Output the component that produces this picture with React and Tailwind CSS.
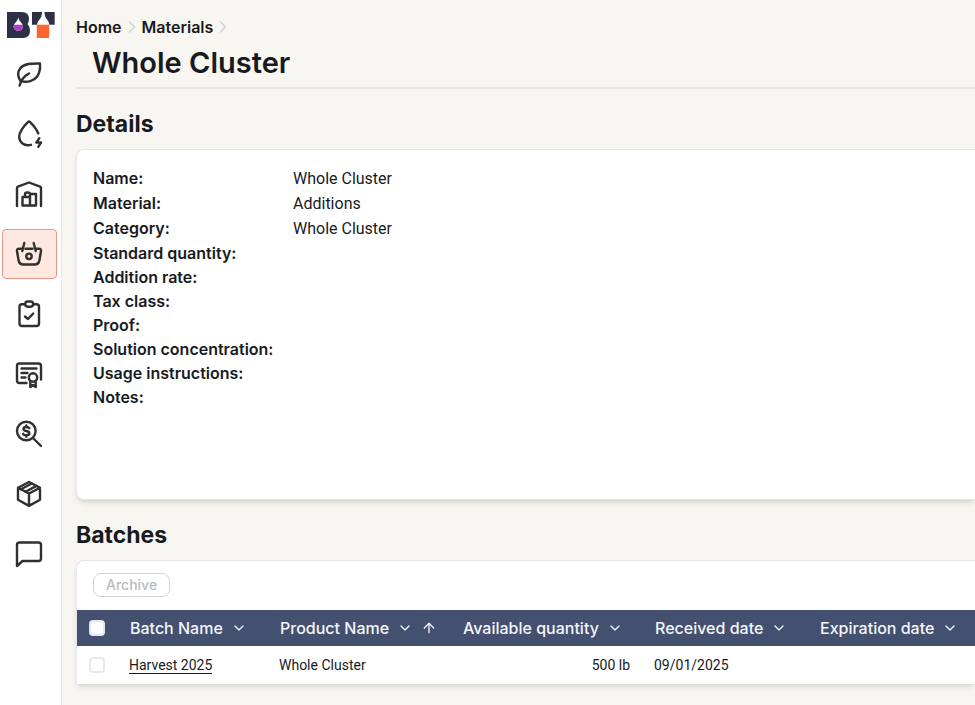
import React, { useState } from 'react';
import { ArrowUp, ChevronDown, ChevronRight } from 'lucide-react';

const NavIcon = ({ children }) => (
    <svg
        viewBox="0 0 30 30"
        className="h-[30px] w-[30px]"
        fill="none"
        stroke="currentColor"
        strokeWidth="2.4"
        strokeLinecap="round"
        strokeLinejoin="round"
        aria-hidden="true"
    >
        {children}
    </svg>
);

const navItems = [
    {
        label: 'Vineyard',
        icon: (
            <>
                <path d="M26 4.500C19 4.500 10.500 4 6.300 9.200C3.300 13 4 18 6.400 21.800C13.500 24 20 22 23.200 17.500C26 13.500 26.300 8.500 26 4.500z" />
                <path d="M15 14.500C10 17 7.300 20.500 5.600 26.500" />
            </>
        )
    },
    {
        label: 'Production',
        icon: (
            <>
                <path d="M24.300 14.500C22.500 10 19 6 15.900 2.900Q15 2.100 14.100 2.900C9.500 7.500 5.200 13 5.200 17.500C5.200 23.300 10 27.500 17 25.800" />
                <path d="M25.300 19.300L22.300 23.500H27L24.300 27.800" />
            </>
        )
    },
    {
        label: 'Warehouse',
        icon: (
            <>
                <path d="M3 27V9Q3 8.100 3.900 7.700L15 3.500L26.100 7.700Q27 8.100 27 9V27" />
                <path d="M8.500 18H16V26.500H8.500zM16 15H22V26.500H16zM11 18V15.500Q11 13.500 13 13.500H14Q16 13.500 16 15.500" />
            </>
        )
    },
    {
        label: 'Materials',
        icon: (
            <>
                <path d="M8 9.700H5Q2.700 9.700 3 12L4.500 21Q5.200 25.500 9.500 25.500H20.500Q24.800 25.500 25.500 21L27 12Q27.300 9.700 25 9.700H22M11.500 9.700H18.500" />
                <path d="M10.300 4L8.300 12M19.700 4L21.700 12" />
                <circle cx="15" cy="17.300" r="2.700" />
            </>
        )
    },
    {
        label: 'Tasks',
        icon: (
            <>
                <path d="M11 5.200H8Q5.500 5.200 5.500 7.700V24.500Q5.500 27 8 27H22.500Q25 27 25 24.500V7.700Q25 5.200 22.500 5.200H19.500" />
                <rect x="11.200" y="2.500" width="8" height="5.200" rx="2.600" />
                <path d="M11 17.500L14 20L19.200 14.500" />
            </>
        )
    },
    {
        label: 'Compliance',
        icon: (
            <>
                <path d="M12.500 24H5.500Q3 24 3 21.500V7Q3 4.500 5.500 4.500H24.500Q27 4.500 27 7V20.500" />
                <path d="M7.500 9.500H22.500M7.500 14H13.500M7.500 18.500H11.500" />
                <circle cx="19" cy="18.500" r="4.200" />
                <path d="M16.300 22V28L19 26L21.700 28V22" />
            </>
        )
    },
    {
        label: 'Costing',
        icon: (
            <>
                <circle cx="12.300" cy="12" r="9.300" />
                <path d="M19 19L27 27" />
                <path d="M15.300 9.200Q14.800 8 12.300 8Q9.500 8 9.500 10Q9.500 11.600 12.300 12Q15.300 12.400 15.300 14.200Q15.300 16.200 12.300 16.200Q9.700 16.200 9.200 14.800M12.300 6.500V8M12.300 16.200V17.700" />
            </>
        )
    },
    {
        label: 'Inventory',
        icon: (
            <>
                <path d="M15 3L26 8.700V20.700L15 26.900L4 20.700V8.700zM4 8.700L15 14.500L26 8.700M15 14.500V26.900" />
                <path d="M7 10.300L17.800 4.500M11.500 12.700L22.500 6.900" />
            </>
        )
    },
    {
        label: 'Messages',
        icon: <path d="M3 27V6Q3 3.500 5.500 3.500H24.500Q27 3.500 27 6V19.500Q27 22 24.500 22H8.500z" />
    }
];

const details = [
    { label: 'Name:', value: 'Whole Cluster' },
    { label: 'Material:', value: 'Additions' },
    { label: 'Category:', value: 'Whole Cluster' },
    { label: 'Standard quantity:' },
    { label: 'Addition rate:' },
    { label: 'Tax class:' },
    { label: 'Proof:' },
    { label: 'Solution concentration:' },
    { label: 'Usage instructions:' },
    { label: 'Notes:' }
];

const columns = [
    { title: 'Batch Name', width: 'w-[150px]' },
    { title: 'Product Name', width: 'w-[183px]', sorted: true },
    { title: 'Available quantity', width: 'w-[192px]' },
    { title: 'Received date', width: 'w-[165px]' },
    { title: 'Expiration date', width: 'w-auto' }
];

const Logo = () => (
    <svg viewBox="0 0 48 26" className="h-[26px] w-12" aria-hidden="true">
        <path d="M0 0H15Q22 0 22 7Q22 10 20.500 12Q23 14.500 23 18.500Q23 26 16 26H0z" fill="#2c3148" />
        <path d="M11.300 5.500Q11.800 8.500 13.800 10.300Q16 12.300 16 14.300A4.700 4.700 0 0 1 6.600 14.300Q6.600 12.300 8.800 10.300Q10.800 8.500 11.300 5.500z" fill="#fff" />
        <path d="M6.600 12.800H16V14.300A4.700 4.700 0 0 1 6.600 14.300z" fill="#b33fc4" />
        <path d="M25 0H35Q35 5 32.500 7.500Q30 10 30 12.700H25zM37.500 0H47.700V12.700H42.300Q42.300 10 40 7.500Q37.500 5 37.500 0z" fill="#2c3148" />
        <rect x="29.800" y="12.700" width="12.400" height="13.300" fill="#fa6530" />
    </svg>
);

const Sidebar = () => (
    <aside className="w-[62px] shrink-0 border-r border-gray-200 bg-white pt-3">
        <a href="#home" aria-label="Dashboard" className="ml-[7px] block">
            <Logo />
        </a>
        <nav className="mt-[11px] flex flex-col gap-[10px] px-[2px]">
            {navItems.map(({ label, icon }) => (
                <a
                    key={label}
                    href={`#${label.toLowerCase()}`}
                    aria-label={label}
                    className={`flex h-[50px] w-[55px] items-center rounded border pl-[11px] text-[#2f3030] ${
                        label === 'Materials' ? 'border-[#ee9584] bg-[#ffe8df]' : 'border-transparent'
                    }`}
                >
                    <NavIcon>{icon}</NavIcon>
                </a>
            ))}
        </nav>
    </aside>
);

const Checkbox = ({ label, checked, onChange }) => (
    <input
        type="checkbox"
        aria-label={label}
        checked={checked}
        onChange={onChange}
        className="block h-4 w-4 appearance-none rounded border-2 border-[#e5e9ee] bg-white checked:bg-[#44506f]"
    />
);

const App = () => {
    const [selected, setSelected] = useState(false);
    const toggle = () => setSelected(prev => !prev);

    return (
        <div className="flex min-h-screen bg-[#f7f6f1] font-['Inter',sans-serif] text-[#181a1f]">
            <Sidebar />

            <main className="min-w-0 flex-1 overflow-hidden pl-[14px] pt-[15px]">
                <header className="border-b-2 border-[#e5e7e3] pb-1">
                    <nav className="flex items-center text-base leading-6 font-semibold">
                        <a href="#home">Home</a>
                        <ChevronRight className="h-5 w-5 text-[#c9d0d2]" strokeWidth={1.5} />
                        <a href="#materials">Materials</a>
                        <ChevronRight className="h-5 w-5 text-[#c9d0d2]" strokeWidth={1.5} />
                    </nav>
                    <h1 className="mt-1 pl-4 text-[29px] leading-10 font-semibold">Whole Cluster</h1>
                </header>

                {/* Details */}
                <section>
                    <h2 className="pt-[19px] pb-[9px] text-[23px] leading-8 font-bold">Details</h2>
                    <dl className="min-h-[351px] rounded-l-lg border-y border-l border-gray-200 bg-white px-4 py-4 shadow-md">
                        {details.map(({ label, value }) => (
                            <div key={label} className="flex text-base leading-6">
                                <dt className="w-[200px] font-semibold">{label}</dt>
                                {value && <dd className="pt-px font-['Roboto',sans-serif]">{value}</dd>}
                            </div>
                        ))}
                    </dl>
                </section>

                {/* Batches */}
                <section>
                    <h2 className="pt-[19px] pb-[9px] text-[23px] leading-8 font-bold">Batches</h2>
                    <div className="rounded-tl-lg border-t border-l border-gray-200 bg-white shadow-md">
                        <div className="px-4 pt-3 pb-[13px]">
                            <button
                                type="button"
                                disabled
                                className="block rounded-lg border border-gray-300 px-3 text-sm leading-[22px] font-medium text-[#b9bbc0]"
                            >
                                Archive
                            </button>
                        </div>
                        <table className="w-full table-fixed border-collapse text-left">
                            <thead>
                                <tr className="h-9 bg-[#44506f] text-[#f3f6fb]">
                                    <th className="w-[40px] pl-3">
                                        <Checkbox label="Select all batches" checked={selected} onChange={toggle} />
                                    </th>
                                    {columns.map(({ title, width, sorted }) => (
                                        <th key={title} className={`${width} pl-[13px] text-base font-medium whitespace-nowrap`}>
                                            <span className="flex items-center">
                                                {title}
                                                <ChevronDown className="ml-2 h-4 w-4" strokeWidth={2} />
                                                {sorted && <ArrowUp className="ml-2 h-4 w-4" strokeWidth={2} />}
                                            </span>
                                        </th>
                                    ))}
                                </tr>
                            </thead>
                            <tbody className="font-['Roboto',sans-serif] text-sm">
                                <tr className="h-[38px]">
                                    <td className="pl-3">
                                        <Checkbox label="Select Harvest 2025" checked={selected} onChange={toggle} />
                                    </td>
                                    <td className="px-3">
                                        <a href="#harvest-2025" className="border-b border-current">Harvest 2025</a>
                                    </td>
                                    <td className="px-3">Whole Cluster</td>
                                    <td className="px-3 text-right">500 lb</td>
                                    <td className="px-3">09/01/2025</td>
                                    <td />
                                </tr>
                            </tbody>
                        </table>
                    </div>
                </section>
            </main>
        </div>
    );
};

export default App;
